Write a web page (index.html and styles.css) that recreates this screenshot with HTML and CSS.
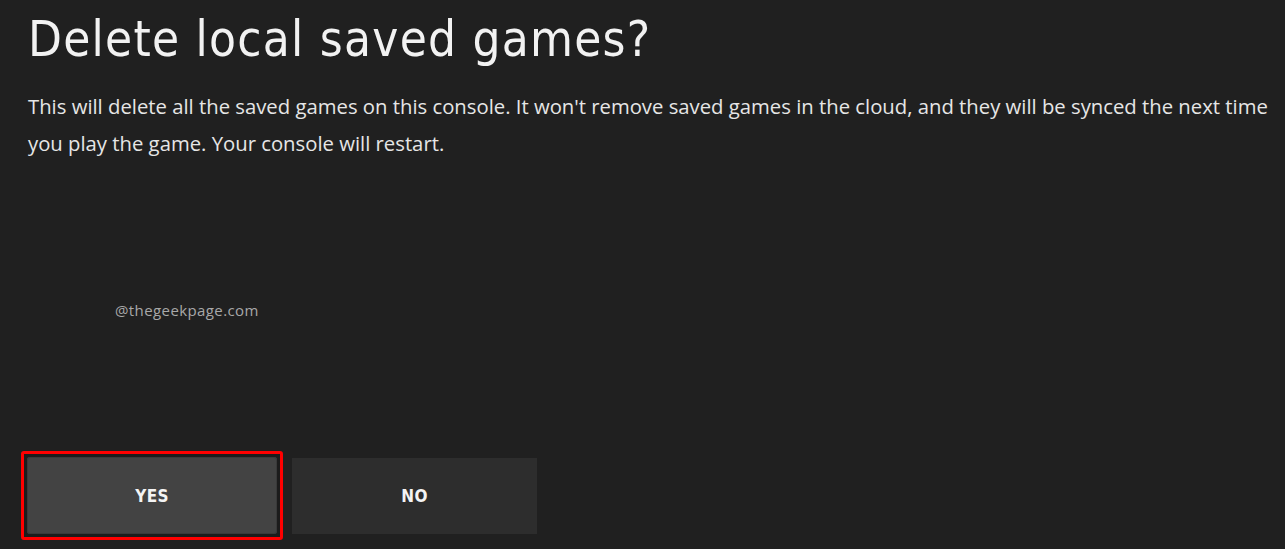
FILE: index.html
```html
<!DOCTYPE html>
<html lang="en">
<head>
<meta charset="utf-8">
<title>Delete local saved games?</title>
<link rel="stylesheet" href="styles.css">
</head>
<body>
<main class="dialog">
  <h1 class="title">Delete local saved games?</h1>
  <p class="message">This will delete all the saved games on this console. It won't remove saved games in the cloud, and they will be synced the next time you play the game. Your console will restart.</p>
  <div class="watermark">@thegeekpage.com</div>
  <div class="actions">
    <div class="focus-ring"><button class="btn btn-yes">YES</button></div>
    <button class="btn btn-no">NO</button>
  </div>
</main>
</body>
</html>
```

FILE: styles.css
```css
html, body {
  margin: 0;
  padding: 0;
  background: #202020;
  height: 100%;
  overflow: hidden;
}

.dialog {
  height: 549px;
  display: flex;
  flex-direction: column;
  padding: 0 0 0 28px;
  box-sizing: border-box;
}

.title {
  margin: 10px 0 0 0;
  font-family: "DejaVu Sans Condensed", "DejaVu Sans", sans-serif;
  font-weight: normal;
  font-size: 49px;
  line-height: 60px;
  color: #f2f2f2;
  letter-spacing: 1.25px;
}

.message {
  margin: 18px 0 0 0;
  width: 1252px;
  font-family: "Open Sans", "Noto Sans", sans-serif;
  font-size: 20.3px;
  line-height: 37px;
  color: #e6e6e6;
}

.watermark {
  margin: 138px 0 0 87px;
  font-family: "Open Sans", sans-serif;
  font-size: 15px;
  color: #a8a8a8;
  letter-spacing: 0.4px;
}

.actions {
  margin-top: auto;
  margin-bottom: 9px;
  margin-left: -7px;
  display: flex;
  align-items: center;
  gap: 9px;
}

.focus-ring {
  border: 3px solid #ff0000;
  border-radius: 3px;
  padding: 3px;
  background: #1c1c1c;
}

.btn {
  display: block;
  border: none;
  font-family: "DejaVu Sans Condensed", "DejaVu Sans", sans-serif;
  font-weight: bold;
  font-size: 17px;
  color: #f4f4f4;
  letter-spacing: 0.3px;
}

.btn-yes {
  width: 250px;
  height: 77px;
  background: #434343;
  border-radius: 3px;
  box-shadow: inset 0 0 0 1px #3a3a3a;
}

.btn-no {
  width: 245px;
  height: 76px;
  background: #2d2d2d;
}
```
